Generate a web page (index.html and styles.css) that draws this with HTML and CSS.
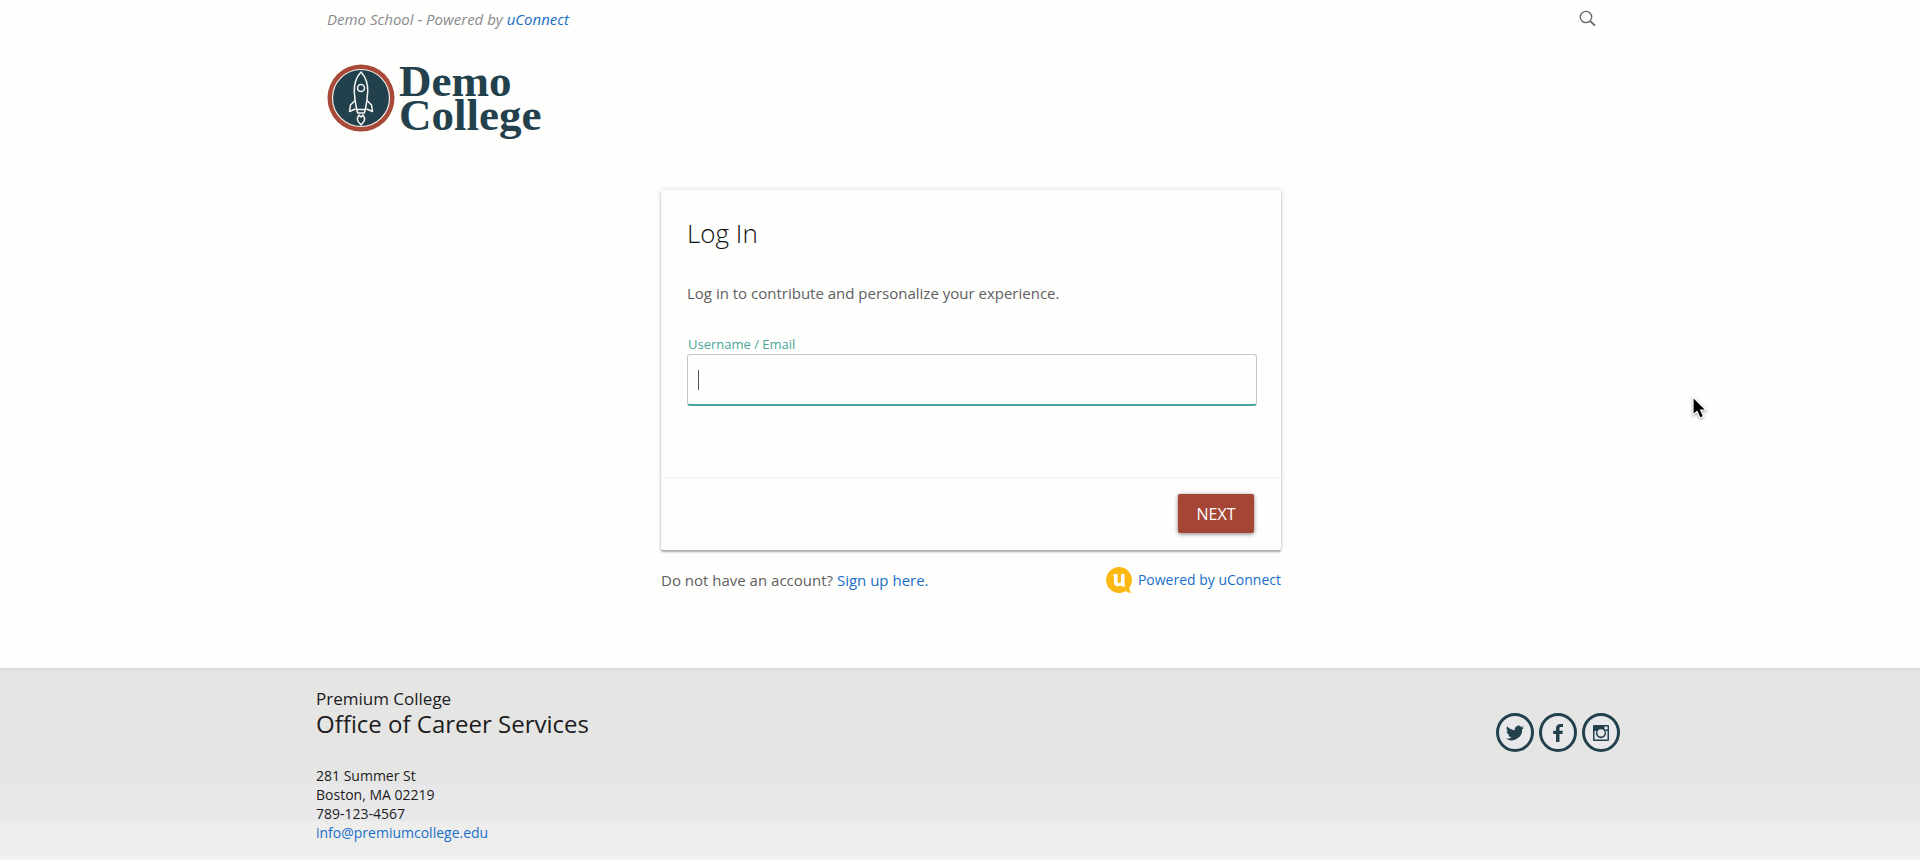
FILE: index.html
```html
<!DOCTYPE html>
<html lang="en">
<head>
<meta charset="utf-8">
<meta name="viewport" content="width=device-width, initial-scale=1">
<title>Log In - Demo College</title>
<link rel="stylesheet" href="styles.css">
</head>
<body>
<header class="wrap header">
  <div class="topbar">
    <p class="tagline">Demo School - Powered by <a href="#uconnect">uConnect</a></p>
    <button class="search" type="button" aria-label="Search">
      <svg width="18" height="18" viewBox="0 0 18 18" fill="none" stroke="#666"><circle cx="7" cy="7" r="5.7" stroke-width="1.3"/><path d="M11.2 11.2L16 15.7" stroke-width="1.8"/></svg>
    </button>
  </div>
  <a class="logo" href="#home">
    <svg width="68" height="68" viewBox="0 0 68 68" fill="none">
      <circle cx="34" cy="34" r="33.5" fill="#a84a37"/>
      <circle cx="34" cy="34" r="28.5" fill="#22414c" stroke="#f3efec" stroke-width="1.2"/>
      <g stroke="#f7f7f5" stroke-width="1.5" stroke-linejoin="round">
        <path d="M34 8C29 13.500 27 20 27.300 27.500C27.500 34 28.500 40 29.700 45.500H38.300C39.500 40 40.500 34 40.700 27.500C41 20 39 13.500 34 8Z"/>
        <circle cx="34" cy="24" r="3.500"/>
        <path d="M28 36.500L23.500 41L22.500 47.500L28.500 45M40 36.500L44.500 41L45.500 47.500L39.500 45"/>
        <path d="M29.700 45.500L30.700 49H37.300L38.300 45.500M32 51C28.500 56 31.500 58 34 61C36.500 58 39.500 56 36 51L34 53Z"/>
      </g>
    </svg>
    <span class="logo-name">Demo<br>College</span>
  </a>
</header>

<main class="wrap main">
  <div class="login">
    <form class="card">
      <div class="card-body">
        <h1>Log In</h1>
        <p class="intro">Log in to contribute and personalize your experience.</p>
        <label for="username">Username / Email</label>
        <input id="username" class="field" type="text" name="username">
      </div>
      <div class="card-actions">
        <button class="next" type="button">NEXT</button>
      </div>
    </form>
    <div class="below">
      <p>Do not have an account? <a href="#signup">Sign up here.</a></p>
      <a class="powered" href="#uconnect">
        <svg width="26" height="26" viewBox="0 0 26 26"><path d="M13 0A13 13 0 1 0 20 24C21.500 25.500 23.500 26 25.500 25.500C24 24.500 23.300 23 23.300 20.800A13 13 0 0 0 13 0Z" fill="#fdb913"/><path d="M7.500 7H11.500V14C11.500 17 15 17 15 14V7H18.500V17.500H19V19.500H15.500V18C12.500 20.500 8 19.500 8 15.500V9H7.500Z" fill="#fff"/></svg>
        Powered by uConnect
      </a>
    </div>
  </div>
</main>

<footer class="footer">
  <div class="wrap footer-inner">
    <div>
      <p class="college">Premium College</p>
      <h2>Office of Career Services</h2>
      <address>281 Summer St<br>Boston, MA 02219<br>789-123-4567<br><a href="mailto:info@premiumcollege.edu">info@premiumcollege.edu</a></address>
    </div>
    <nav class="social" aria-label="Social media">
      <a href="#twitter" aria-label="Twitter"><svg width="18" height="18" viewBox="0 0 24 24"><path d="M24 4.600a10 10 0 0 1-2.800.8 5 5 0 0 0 2.100-2.700 10 10 0 0 1-3.100 1.200 4.900 4.900 0 0 0-8.400 4.500A14 14 0 0 1 1.700 3.100a4.900 4.900 0 0 0 1.500 6.600 5 5 0 0 1-2.200-.6 4.900 4.900 0 0 0 4 4.900 5 5 0 0 1-2.300.1 4.900 4.900 0 0 0 4.600 3.400A10 10 0 0 1 0 19.500 14 14 0 0 0 21.500 7a10 10 0 0 0 2.500-2.400Z"/></svg></a>
      <a href="#facebook" aria-label="Facebook"><svg width="18" height="18" viewBox="0 0 18 18"><path d="M7 18V10H4.200V6.800H7V4.500C7 1.600 8.700 0 11.300 0H14V3.100H12C10.900 3.100 10.500 3.600 10.500 4.600V6.800H13.800L13.400 10H10.500V18Z"/></svg></a>
      <a href="#instagram" aria-label="Instagram"><svg width="18" height="18" viewBox="0 0 18 18"><path fill-rule="evenodd" d="M2 1H16Q17 1 17 2V16Q17 17 16 17H2Q1 17 1 16V2Q1 1 2 1ZM12.500 2.500V5.500H15.600V2.500ZM2.500 7V15.500H15.500V7H13.500A5 5 0 1 1 4.500 7ZM9 5.200A3.600 3.600 0 1 0 9 12.400A3.600 3.600 0 1 0 9 5.200Z"/></svg></a>
    </nav>
  </div>
</footer>

<svg class="pointer" width="16" height="26" viewBox="0 0 16 26" aria-hidden="true"><path d="M1 1V19L5 15.500L8 22L11.500 20.500L8.700 14H14Z" fill="#000" stroke="#fff" stroke-width="1.200"/></svg>
</body>
</html>
```
FILE: styles.css
```css
* { box-sizing: border-box; }

body {
  min-height: 100vh;
  margin: 0;
  display: flex;
  flex-direction: column;
  background: #fefefd;
  color: #5f5f61;
  font: 15px/20px "Open Sans", sans-serif;
}

h1, h2, p { margin: 0; font-weight: 400; }
a { color: #1a6fc9; text-decoration: none; }
svg { display: block; flex: none; }

.wrap {
  width: 100%;
  max-width: 1320px;
  margin: 0 auto;
  padding-left: 16px;
}

.header { padding-left: 27px; }
.topbar {
  display: flex;
  justify-content: space-between;
  align-items: center;
  height: 38px;
  padding-right: 23px;
}
.tagline { color: #8a8a8c; font-size: 15px; font-style: italic; }
.search { padding: 0; border: 0; background: none; }

.logo { display: inline-flex; gap: 4px; padding-top: 26px; }
.logo-name {
  color: #22414c;
  font: 700 45px/34px "Liberation Serif", serif;
}

.main { padding-left: 22px; padding-top: 54px; }
.login { max-width: 620px; margin: 0 auto; }

.card {
  background: #fefefd;
  border-radius: 2px;
  box-shadow: 0 2px 2px rgba(0, 0, 0, .3), 0 0 4px rgba(0, 0, 30, .16);
}
.card-body { padding: 24px 24px 71px 26px; }
h1 {
  color: #111;
  font-size: 26px;
  font-weight: 300;
  line-height: 38px;
}
.intro { margin: 31px 0; }
label {
  display: block;
  padding-left: 1px;
  color: #4aa69c;
  font-size: 13px;
  line-height: 20px;
}
.field {
  display: block;
  width: 100%;
  height: 52px;
  padding: 0 11px;
  border: 1px solid #c6c6c6;
  border-bottom: 2px solid #4aa69c;
  border-radius: 3px;
  outline: 0;
  background: linear-gradient(#555, #555) 10px 15px / 1px 20px no-repeat;
  font: inherit;
}
.card-actions {
  display: flex;
  justify-content: flex-end;
  padding: 16px 27px 17px;
  border-top: 1px solid #f0f0f0;
}
.next {
  width: 76px;
  height: 39px;
  padding: 0;
  border: 0;
  border-radius: 2px;
  background: #a54535;
  box-shadow: 0 1px 4px rgba(0, 0, 0, .5);
  color: #fff;
  font: 500 16px/20px "Open Sans", sans-serif;
}

.below {
  display: flex;
  justify-content: space-between;
  align-items: center;
  padding-top: 17px;
}
.powered { display: flex; align-items: center; gap: 6px; font-size: 14px; }

.footer {
  flex: 1;
  margin-top: 75px;
  border-top: 2px solid #dadad8;
  background: linear-gradient(#e5e5e3 114px, #e8e8ea 114px 151px, #ededec 151px 186px, #f2f2f3 186px);
  color: #1c1c1e;
}
.footer-inner {
  display: flex;
  justify-content: space-between;
  align-items: flex-start;
  padding-top: 17px;
}
.college { font-size: 17px; line-height: 23px; }
h2 { font-size: 24px; line-height: 28px; }
address { margin-top: 28px; font-size: 14px; font-style: normal; line-height: 19px; }
.social { display: flex; gap: 5px; padding-top: 26px; }
.social a {
  display: flex;
  align-items: center;
  justify-content: center;
  width: 38px;
  height: 39px;
  border: 3px solid #22414c;
  border-radius: 50%;
  background: #e8e8ea;
}
.social svg { fill: #22414c; }

.pointer {
  position: absolute;
  top: 396px;
  left: 1692px;
  filter: drop-shadow(0 1px 1px rgba(0, 0, 0, .4));
}
```
